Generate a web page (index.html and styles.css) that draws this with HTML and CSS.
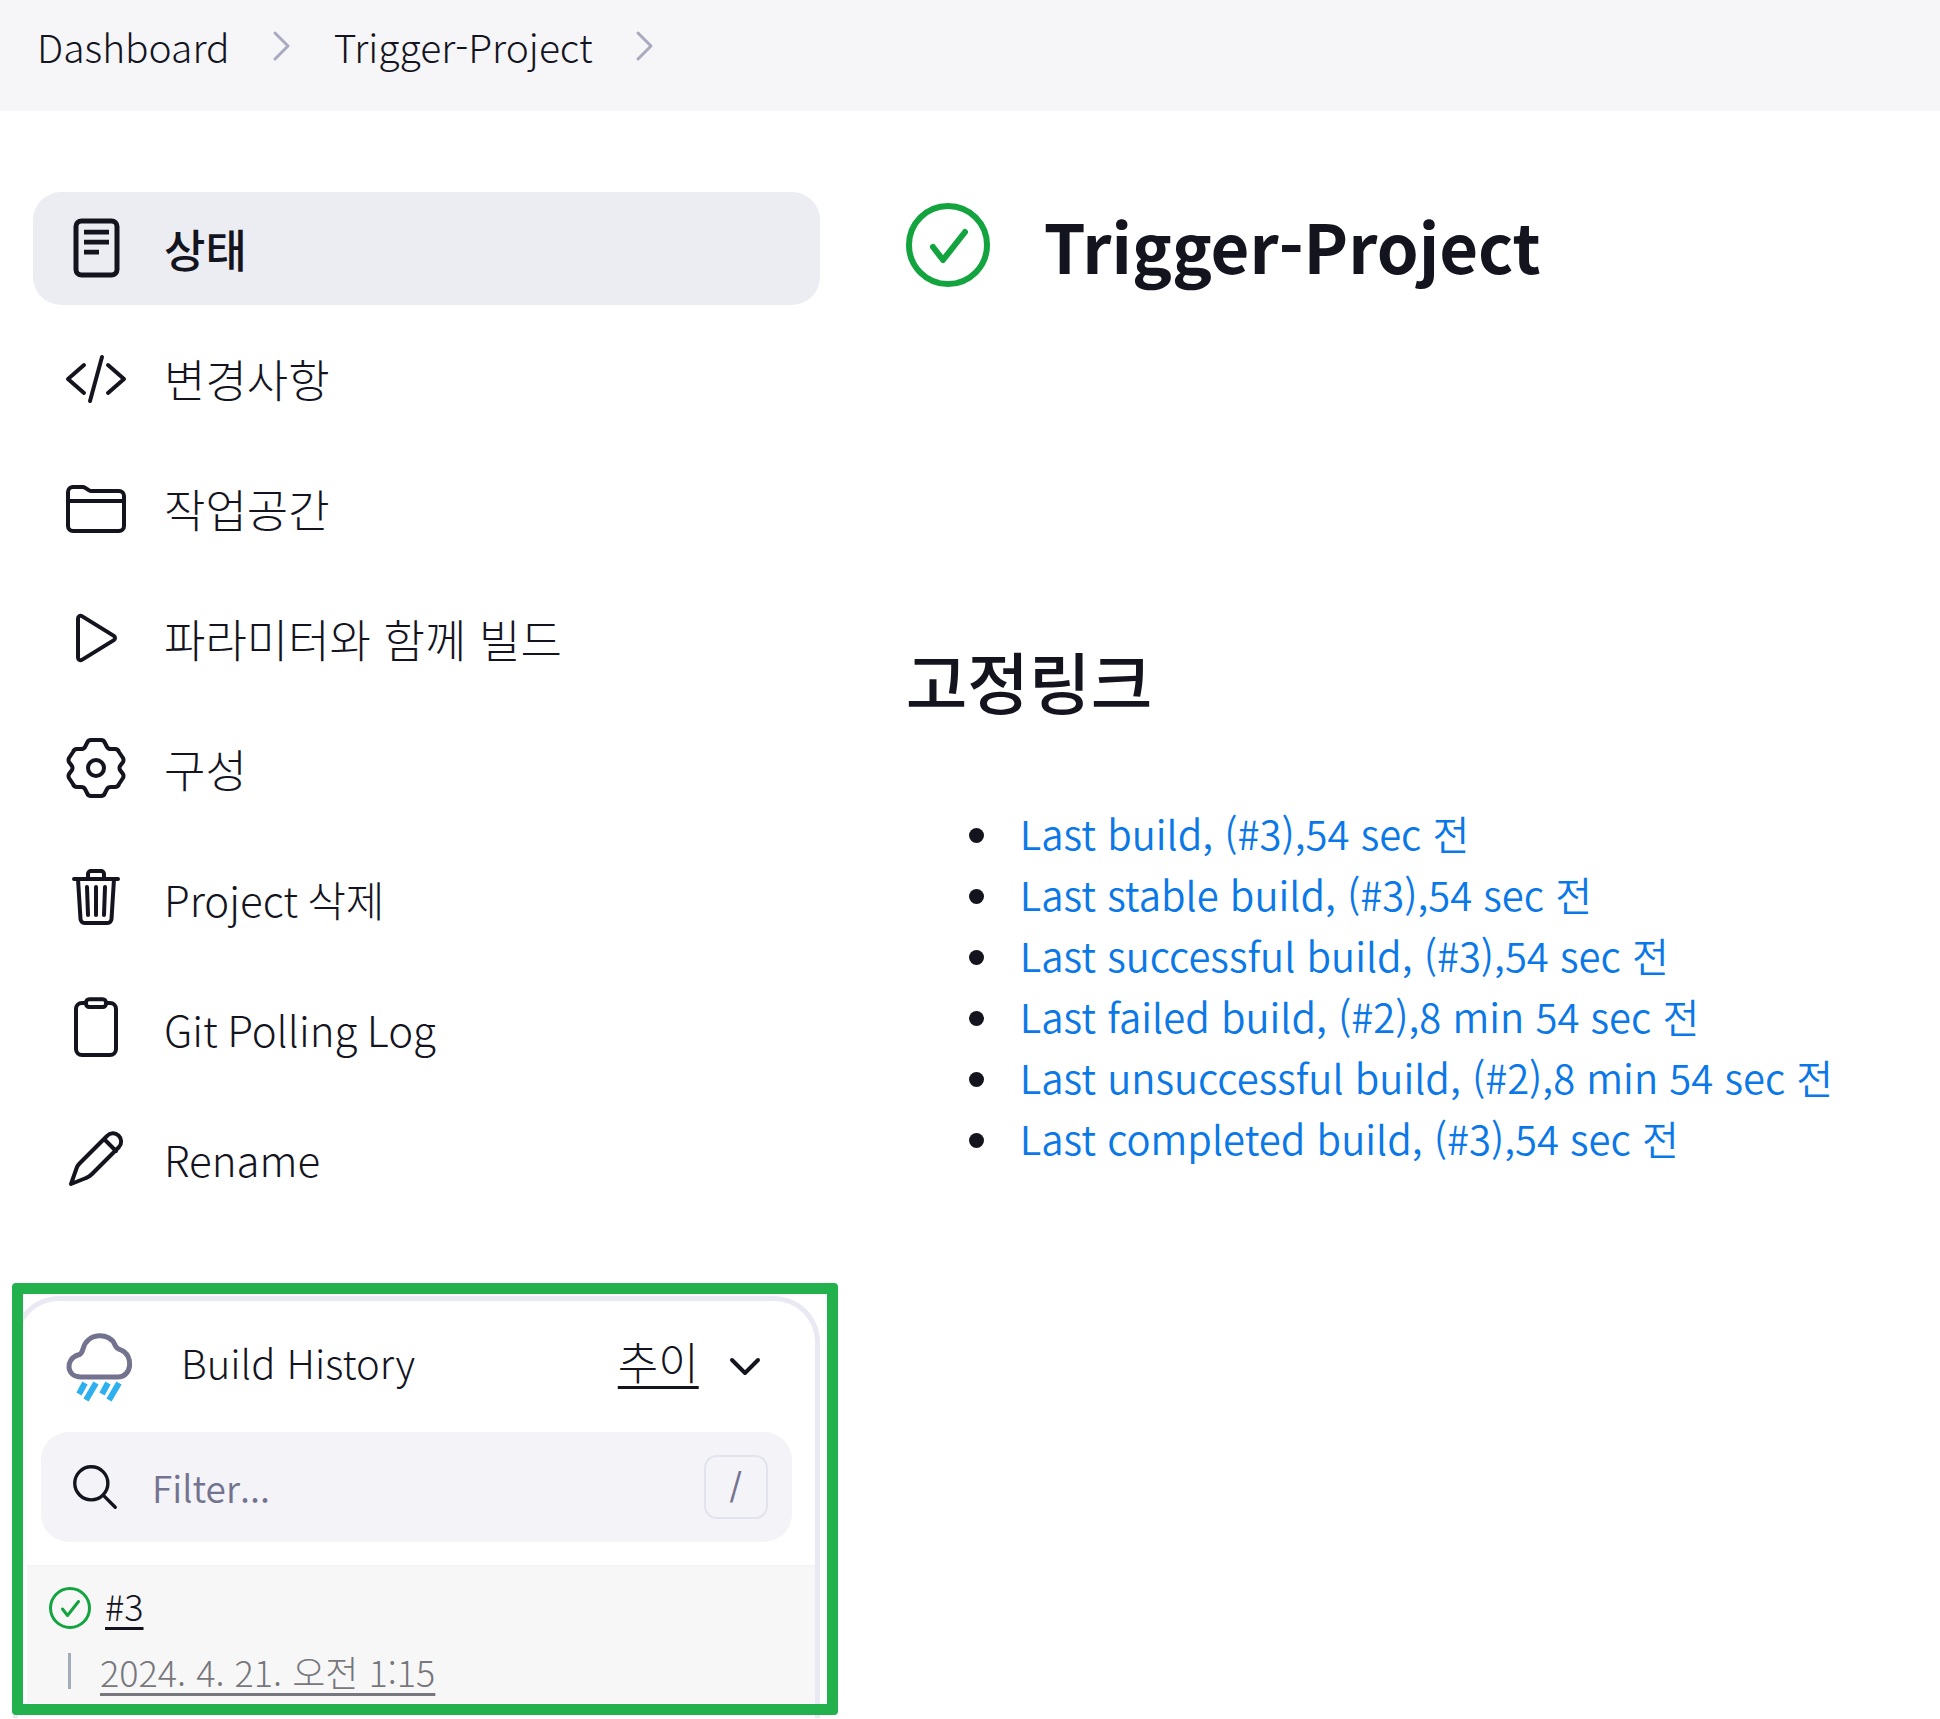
FILE: index.html
```html
<!DOCTYPE html>
<html lang="ko">
<head>
    <meta charset="UTF-8">
    <meta name="viewport" content="width=device-width, initial-scale=1.0">
    <title>Trigger-Project [Jenkins]</title>
    <link rel="stylesheet" href="styles.css">
</head>
<body>
    <nav class="breadcrumbs" aria-label="breadcrumbs">
        <a href="#">Dashboard</a>
        <svg class="crumb-arrow" viewBox="0 0 20 32"><path d="M3 3l13 13L3 29"/></svg>
        <a href="#">Trigger-Project</a>
        <svg class="crumb-arrow" viewBox="0 0 20 32"><path d="M3 3l13 13L3 29"/></svg>
    </nav>

    <div class="page">
        <aside class="side-panel">
            <nav class="tasks">
                <a href="#" class="task active">
                    <svg class="icon" viewBox="0 0 512 512"><rect x="96" y="32" width="328" height="432" rx="44" stroke-width="40"/><path d="M160 120h200M160 200h200M160 280h120" stroke-width="38" stroke-linecap="butt"/></svg>
                    <span>상태</span>
                </a>
                <a href="#" class="task">
                    <svg class="icon" viewBox="0 0 512 512"><path d="M160 368L32 256l128-112M352 368l128-112-128-112M304 80l-96 352"/></svg>
                    <span>변경사항</span>
                </a>
                <a href="#" class="task">
                    <svg class="icon" viewBox="0 0 512 512"><path d="M440 432H72a40 40 0 01-40-40V120a40 40 0 0140-40h75.89a40 40 0 0122.19 6.72l27.84 18.56a40 40 0 0022.19 6.72H440a40 40 0 0140 40v240a40 40 0 01-40 40zM32 192h448"/></svg>
                    <span>작업공간</span>
                </a>
                <a href="#" class="task">
                    <svg class="icon" viewBox="0 8 512 512"><path d="M112 101v310c0 17.44 17 28.52 31 20.16l256-158c12-8 12-26 0-34L143 80.84c-14-8.36-31 2.72-31 20.16z"/></svg>
                    <span>파라미터와 함께 빌드</span>
                </a>
                <a href="#" class="task">
                    <svg class="icon" viewBox="0 1 64 64"><circle cx="32" cy="32" r="8" stroke-width="4"/><path d="M27 4H37Q40 4 41 7L43 11Q44 13 47 13H51Q54 13 55 16L59 22Q60 24 59 26L56 30Q55 32 56 34L59 38Q60 40 59 42L55 48Q54 51 51 51H47Q44 51 43 53L41 57Q40 60 37 60H27Q24 60 23 57L21 53Q20 51 17 51H13Q10 51 9 48L5 42Q4 40 5 38L8 34Q9 32 8 30L5 26Q4 24 5 22L9 16Q10 13 13 13H17Q20 13 21 11L23 7Q24 4 27 4Z" stroke-width="4"/></svg>
                    <span>구성</span>
                </a>
                <a href="#" class="task" lang="en">
                    <svg class="icon" viewBox="0 16 512 512"><path d="M112 112l20 320c.95 18.49 14.4 32 32 32h184c17.67 0 30.87-13.51 32-32l20-320M80 112h352M192 112V72a23.93 23.93 0 0124-24h80a23.93 23.93 0 0124 24v40M256 176v224M184 176l8 224M328 176l-8 224"/></svg>
                    <span>Project 삭제</span>
                </a>
                <a href="#" class="task" lang="en">
                    <svg class="icon" viewBox="0 16 512 512"><path d="M336 64h32a48 48 0 0148 48v320a48 48 0 01-48 48H144a48 48 0 01-48-48V112a48 48 0 0148-48h32"/><rect x="176" y="34" width="160" height="62" rx="26"/></svg>
                    <span>Git Polling Log</span>
                </a>
                <a href="#" class="task" lang="en">
                    <svg class="icon" viewBox="0 0 64 64"><path d="M7 57L13 40Q14 38 16 36L43 9A8 8 0 0 1 55 20L28 47Q25 50 22 51ZM40 12L52 24" stroke-width="4"/></svg>
                    <span>Rename</span>
                </a>
            </nav>

            <section class="build-history">
                <div class="history-header">
                    <svg class="weather" viewBox="0 0 70 70">
                        <path class="cloud" d="M17 45C2 45 1 27 14 23C18 22 18 20 19 17C23 0 46 0 51 13C52 16 54 17 57 18C70 23 68 45 54 45Z"/>
                        <path class="rain" d="M21 51l-6 11M32 51L22 68M44 51l-6 11M55 51L45 68"/>
                    </svg>
                    <h2 class="history-title">Build History</h2>
                    <a href="#" class="trend">추이</a>
                    <button class="collapse" type="button" aria-label="Build History">
                        <svg viewBox="0 0 32 20"><path d="M3 3l13 13L29 3"/></svg>
                    </button>
                </div>

                <div class="filter">
                    <svg class="search-icon" viewBox="0 0 512 512"><circle cx="221" cy="221" r="157"/><path d="M338 338l110 110"/></svg>
                    <input type="text" placeholder="Filter..." aria-label="Filter">
                    <kbd>/</kbd>
                </div>

                <div class="build">
                    <div class="build-name">
                        <svg class="status small" viewBox="0 0 84 84"><circle cx="42" cy="42" r="39"/><path d="M27 44l10 13 22-28"/></svg>
                        <a href="#">#3</a>
                    </div>
                    <div class="build-date">
                        <a href="#">2024. 4. 21. 오전 1:15</a>
                    </div>
                </div>
                <div class="highlight"></div>
            </section>
        </aside>

        <main class="main-panel">
            <div class="project-title">
                <svg class="status" viewBox="0 0 84 84"><circle cx="42" cy="42" r="39"/><path d="M27 44l10 13 22-28"/></svg>
                <h1>Trigger-Project</h1>
            </div>

            <h2 class="permalinks-title">고정링크</h2>
            <ul class="permalinks">
                <li><a href="#">Last build, (#3),54 sec 전</a></li>
                <li><a href="#">Last stable build, (#3),54 sec 전</a></li>
                <li><a href="#">Last successful build, (#3),54 sec 전</a></li>
                <li><a href="#">Last failed build, (#2),8 min 54 sec 전</a></li>
                <li><a href="#">Last unsuccessful build, (#2),8 min 54 sec 전</a></li>
                <li><a href="#">Last completed build, (#3),54 sec 전</a></li>
            </ul>
        </main>
    </div>
</body>
</html>
```

FILE: styles.css
```css
:root {
    --text: #14141f;
    --muted: #737390;
    --link: #0b78e8;
    --green: #13a33f;
    --panel-border: #e9e9f3;
    --field: #f3f3f8;
}

* {
    box-sizing: border-box;
}

body {
    margin: 0;
    font-family: 'Noto Sans CJK KR', 'Noto Sans', sans-serif;
    font-size: 40px;
    font-weight: 300;
    line-height: 60px;
    color: var(--text);
    background: #fff;
}

a {
    color: inherit;
    text-decoration: none;
}

h1, h2 {
    margin: 0;
}

svg {
    display: block;
    flex: none;
    fill: none;
    stroke: currentColor;
    stroke-linecap: round;
    stroke-linejoin: round;
}

.breadcrumbs {
    display: flex;
    align-items: center;
    gap: 42px;
    height: 111px;
    padding: 0 37px 20px;
    background: #f6f6f8;
    font-size: 39px;
}

.crumb-arrow {
    width: 20px;
    height: 32px;
    color: #a9a9c0;
    stroke-width: 3;
}

.page {
    display: grid;
    grid-template-columns: 44fr 56fr;
    gap: 86px;
    padding: 81px 33px 0;
}

/* 왼쪽 메뉴 */
.tasks {
    display: flex;
    flex-direction: column;
    gap: 17px;
}

.task {
    display: flex;
    align-items: center;
    gap: 36px;
    height: 113px;
    padding: 0 31px;
    border-radius: 28px;
    font-size: 45px;
}

.task:lang(en) {
    font-size: 42px;
}

.task.active {
    background: #ecedf3;
    font-weight: 500;
}

.icon {
    width: 64px;
    height: 64px;
    stroke-width: 32;
}

/* 빌드 기록 */
.build-history {
    position: relative;
    height: 422px;
    margin: 81px 0 0 -20px;
    border: 5px solid var(--panel-border);
    border-bottom: 0;
    border-radius: 46px 46px 0 0;
}

.highlight {
    position: absolute;
    inset: -18px -23px 3px -6px;
    border: 11px solid #22b14c;
    border-radius: 4px;
    pointer-events: none;
}

.history-header {
    display: flex;
    align-items: center;
    height: 131px;
    padding: 0 44px 0 46px;
}

.weather {
    width: 70px;
    height: 70px;
    margin-right: 47px;
}

.cloud {
    stroke: var(--muted);
    stroke-width: 5;
}

.rain {
    stroke: #2fb0ee;
    stroke-width: 6;
    stroke-linecap: butt;
}

.history-title {
    flex: 1;
    padding-bottom: 10px;
    font-size: 40px;
    font-weight: 300;
}

.trend {
    padding-bottom: 12px;
    font-size: 44px;
}

.trend,
.build a {
    text-decoration: underline;
    text-decoration-thickness: 3px;
    text-underline-offset: 6px;
}

.collapse {
    margin-left: 20px;
    padding: 10px;
    border: 0;
    background: none;
    color: inherit;
}

.collapse svg {
    width: 32px;
    height: 20px;
    stroke-width: 4;
}

.filter {
    display: flex;
    align-items: center;
    height: 110px;
    margin: 0 23px;
    padding: 0 24px 0 27px;
    border-radius: 28px;
    background: var(--field);
}

.search-icon {
    width: 54px;
    height: 54px;
    stroke-width: 32;
}

.filter input {
    flex: 1;
    min-width: 0;
    padding: 0 30px;
    border: 0;
    outline: 0;
    background: none;
    font: inherit;
    font-size: 37px;
    font-weight: 350;
    color: var(--text);
}

.filter input::placeholder {
    color: var(--muted);
    opacity: 1;
}

kbd {
    width: 64px;
    height: 64px;
    border: 2px solid #e3e3ee;
    border-radius: 13px;
    font: inherit;
    font-size: 32px;
    font-weight: 500;
    line-height: 56px;
    text-align: center;
    color: var(--muted);
}

.build {
    height: 138px;
    margin: 23px 0 0 9px;
    padding: 8px 0 0 22px;
    border-top: 2px solid var(--field);
    background: #f7f7f7;
    font-size: 36px;
}

.build-name {
    display: flex;
    align-items: center;
    gap: 14px;
}

.build-name a {
    padding-bottom: 6px;
}

.build-date {
    display: flex;
    align-items: center;
    margin-left: 19px;
    color: #77777d;
}

.build-date::before {
    content: "";
    width: 3px;
    height: 36px;
    margin-right: 29px;
    background: #a3adb8;
}

/* 프로젝트 본문 */
.project-title {
    display: flex;
    align-items: center;
    gap: 54px;
    padding-top: 11px;
}

.status {
    width: 84px;
    height: 84px;
    color: var(--green);
    stroke-width: 6;
}

.status.small {
    width: 42px;
    height: 42px;
}

h1 {
    font-size: 67px;
    font-weight: 700;
    line-height: 84px;
}

.permalinks-title {
    margin-top: 348px;
    font-size: 67px;
    font-weight: 500;
    line-height: 90px;
}

.permalinks {
    margin: 78px 0 0;
    padding-left: 100px;
    font-weight: 350;
    line-height: 61px;
}

.permalinks li {
    padding-left: 14px;
}

.permalinks a {
    color: var(--link);
}
```
